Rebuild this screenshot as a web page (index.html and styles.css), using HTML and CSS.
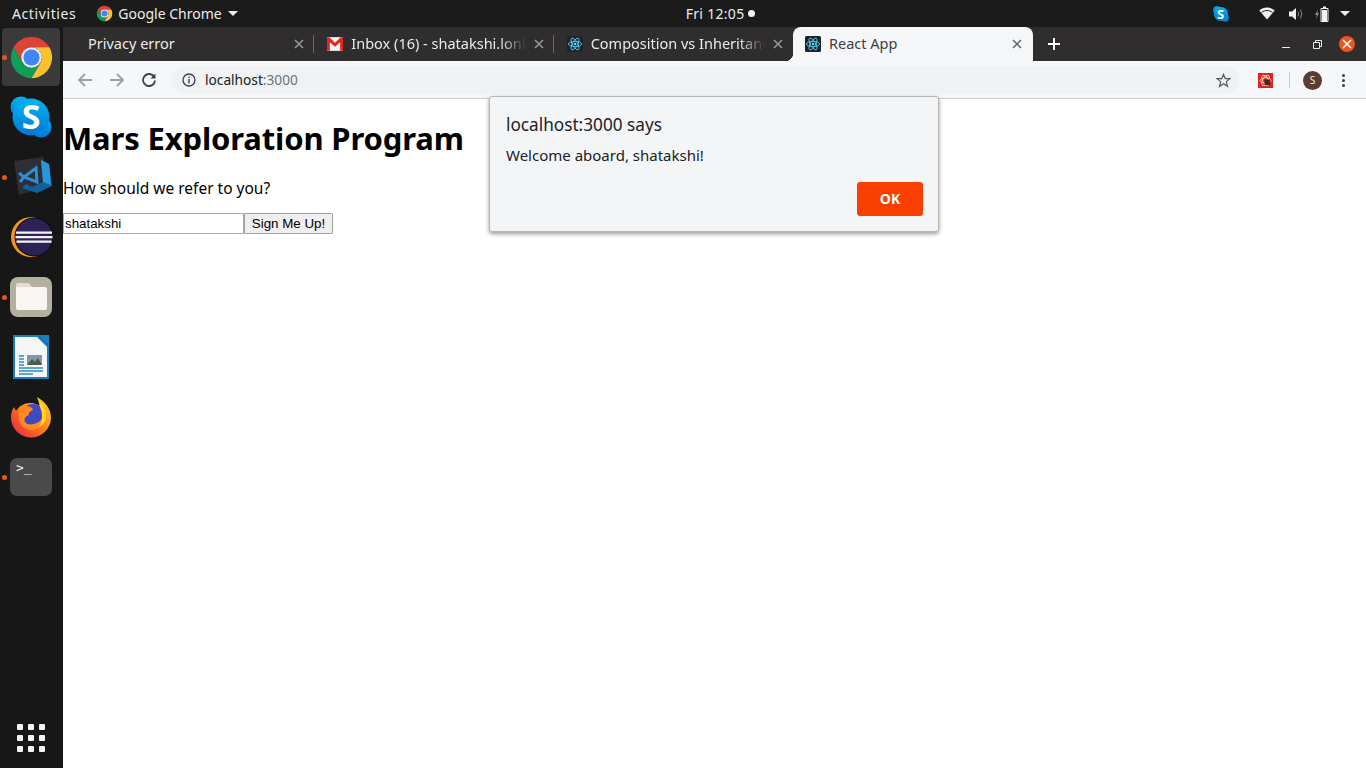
FILE: index.html
```html
<!doctype html>
<html lang="en">
<head>
<meta charset="utf-8">
<title>React App</title>
<link rel="stylesheet" href="styles.css">
</head>
<body>

<svg class="defs" width="0" height="0">
  <symbol id="chrome" viewBox="0 0 48 48">
    <path fill="#db4437" d="M24 13H43.05A22 22 0 0 0 4.97 13L14.47 29.5A11 11 0 0 1 24 13Z"/>
    <path fill="#fbc02d" d="M33.53 29.5L24 46A22 22 0 0 0 43.05 13H24A11 11 0 0 1 33.53 29.5Z"/>
    <path fill="#0f9d58" d="M14.47 29.5L4.97 13A22 22 0 0 0 24 46L33.53 29.5A11 11 0 0 1 14.47 29.5Z"/>
    <circle cx="24" cy="24" r="11" fill="#e8eaf0"/>
    <circle cx="24" cy="24" r="8.6" fill="#4285f4"/>
  </symbol>
  <symbol id="react" viewBox="0 0 16 16">
    <rect width="16" height="16" rx="1.5" fill="#20232a"/>
    <g fill="none" stroke="#61dafb" stroke-width=".8">
      <ellipse cx="8" cy="8" rx="6.6" ry="2.6"/>
      <ellipse cx="8" cy="8" rx="6.6" ry="2.6" transform="rotate(60 8 8)"/>
      <ellipse cx="8" cy="8" rx="6.6" ry="2.6" transform="rotate(120 8 8)"/>
    </g>
    <circle cx="8" cy="8" r="1.3" fill="#61dafb"/>
  </symbol>
  <symbol id="skype" viewBox="0 0 42 42">
    <defs>
      <linearGradient id="skypeBlue" x1="0" y1="0" x2="0" y2="1">
        <stop offset="0" stop-color="#00b4f1"/>
        <stop offset="1" stop-color="#0078d7"/>
      </linearGradient>
    </defs>
    <circle cx="11" cy="11" r="10.5" fill="url(#skypeBlue)"/>
    <circle cx="31" cy="31" r="10.5" fill="url(#skypeBlue)"/>
    <circle cx="21" cy="21" r="18.5" fill="url(#skypeBlue)"/>
  </symbol>
  <symbol id="close" viewBox="0 0 10 10">
    <path d="M1 1L9 9M9 1L1 9" fill="none" stroke="currentColor" stroke-width="1.5"/>
  </symbol>
</svg>

<div class="topbar">
  <span class="activities">Activities</span>
  <span class="appmenu">
    <svg class="appmenu-icon"><use href="#chrome"/></svg>
    Google Chrome
    <span class="caret"></span>
  </span>
  <span class="clock">Fri 12:05 <span class="clock-dot"></span></span>
  <div class="tray">
    <span class="tray-skype">
      <svg width="16" height="16"><use href="#skype"/></svg>
      <span class="tray-skype-s">S</span>
    </span>
    <svg class="tray-wifi" width="16" height="13" viewBox="0 0 16 13">
      <path fill="#f2f2f2" d="M8 12.500L.3 3.600C2.400 1.700 5 .6 8 .6s5.600 1.100 7.700 3z"/>
      <path fill="none" stroke="#1b1b1b" stroke-width="1" d="M2.600 5.400C4.100 4.200 6 3.500 8 3.500s3.900.7 5.400 1.900"/>
    </svg>
    <svg class="tray-vol" width="15" height="14" viewBox="0 0 15 14">
      <path fill="#f2f2f2" d="M0 4.500h3L7 1v12L3 9.500H0z"/>
      <path fill="none" stroke="#8a8a8a" stroke-width="1" d="M9 4.500q1.500 2.500 0 5M11.500 2.500q2.500 4.500 0 9"/>
    </svg>
    <svg class="tray-bat" width="14" height="16" viewBox="0 0 14 16">
      <path fill="#8a8a8a" d="M3 3L0 9h1.800L1 13l3-6H2.200z"/>
      <path fill="none" stroke="#f2f2f2" d="M6 2.500h7v13H6z"/>
      <rect x="8" y=".5" width="3" height="2" fill="#f2f2f2"/>
      <rect x="7" y="4" width="5" height="11" fill="#f2f2f2"/>
    </svg>
    <span class="caret"></span>
  </div>
</div>

<div class="desktop">
  <nav class="dock">
    <div class="dock-item is-active running">
      <svg width="45" height="45"><use href="#chrome"/></svg>
    </div>
    <div class="dock-item">
      <span class="dock-skype">
        <svg width="42" height="42"><use href="#skype"/></svg>
        <span class="dock-skype-s">S</span>
      </span>
    </div>
    <div class="dock-item running">
      <svg width="42" height="42" viewBox="0 0 42 42">
        <path fill="#2e2e33" d="M4 5L33 1L42 29L9 39Z"/>
        <path fill="#0e639f" d="M12 32L27 37L42 30L39 8L31 4L33 26L22 31L16 28Z"/>
        <path fill="#2a97dd" d="M31 4L39 8L41 29L33 26Z"/>
        <path fill="none" stroke="#2a8fd6" stroke-width="3" d="M9 17l5 4l-4 5M14 21L26 12L27 26L14 21"/>
      </svg>
    </div>
    <div class="dock-item">
      <svg width="44" height="42" viewBox="0 0 44 42">
        <circle cx="22" cy="21" r="20" fill="#f7941e"/>
        <circle cx="25" cy="21" r="19.500" fill="#0d0d12"/>
        <circle cx="25" cy="21" r="18.500" fill="#2c2255"/>
        <path fill="#f4f2f8" d="M7 15.500h36v2.300H7zM6.500 20h37v2.300h-37zM7.500 24.500h35v2.300h-35z"/>
      </svg>
    </div>
    <div class="dock-item running">
      <svg width="42" height="40" viewBox="0 0 42 40">
        <rect width="42" height="40" rx="8" fill="#b5af9f"/>
        <path fill="#f7f6f3" d="M6 9a3 3 0 0 1 3-3h9l4 4h13a2 2 0 0 1 2 2v19a2 2 0 0 1-2 2H8a2 2 0 0 1-2-2z"/>
        <path fill="#dfdcd4" d="M6 9a3 3 0 0 1 3-3h9l4 4H6z"/>
      </svg>
    </div>
    <div class="dock-item">
      <svg width="36" height="44" viewBox="0 0 36 44">
        <path fill="#1c7fbc" d="M0 0H25L36 11V44H0Z"/>
        <path fill="#f4f6f8" d="M2 2H24L34 12V42H2Z"/>
        <path fill="#1c7fbc" d="M25 0H36V11Z"/>
        <path stroke="#2c8cc7" stroke-width="1.300" d="M6 21h5M6 24h5M6 27h5M6 30h5M6 33h24M6 36h24M6 39h14"/>
        <rect x="14" y="20" width="15" height="10" fill="#7f97a8"/>
        <path fill="#4d5a48" d="M14 30l5-6l3 3l3-4l4 7z"/>
      </svg>
    </div>
    <div class="dock-item">
      <svg width="42" height="42" viewBox="0 0 42 42">
        <defs>
          <linearGradient id="foxFur" x1="1" y1="0" x2="0" y2="1">
            <stop offset="0" stop-color="#ffe226"/>
            <stop offset=".5" stop-color="#ff7a18"/>
            <stop offset="1" stop-color="#e6194b"/>
          </linearGradient>
        </defs>
        <path fill="url(#foxFur)" d="M27 1C34 5 41 12 41 22A20 20 0 1 1 1 21C1 17 2 14 4 11L6 15C9 10 14 7 20 7C25 7 28 9 30 10C29 7 28 4 27 1Z"/>
        <circle cx="23" cy="20" r="12" fill="#3f49c4"/>
        <path fill="#ff8a1f" d="M10 11C15 9 22 10 23 14C20 15 18 17 19 19C15 20 13 24 16 27C20 30 27 28 31 24C33 21 33 18 32 15C36 21 33 33 22 34C14 34 8 27 9 20C9 17 9 14 10 11Z"/>
        <path fill="#ffd426" d="M29 5C34 9 37 15 36 22C35 27 32 30 28 32C32 27 33 20 31 14C30 11 29 8 29 5Z"/>
      </svg>
    </div>
    <div class="dock-item running">
      <span class="terminal-icon">&gt;_</span>
    </div>
    <div class="apps-grid">
      <i></i><i></i><i></i><i></i><i></i><i></i><i></i><i></i><i></i>
    </div>
  </nav>

  <main class="window">
    <div class="tabstrip">
      <div class="tab">
        <span class="tab-title">Privacy error</span>
        <svg class="tab-close"><use href="#close"/></svg>
      </div>
      <div class="tab">
        <svg class="favicon" viewBox="0 0 14 12">
          <rect width="14" height="12" fill="#f5f5f5"/>
          <path d="M0 12V0h2l5 5l5-5h2v12h-2.500V4.500L7 8.500L2.500 4.500V12z" fill="#e0281f"/>
        </svg>
        <span class="tab-title is-cut">Inbox (16) - shatakshi.lonk</span>
        <svg class="tab-close"><use href="#close"/></svg>
      </div>
      <div class="tab">
        <svg class="favicon"><use href="#react"/></svg>
        <span class="tab-title is-cut">Composition vs Inheritanc</span>
        <svg class="tab-close"><use href="#close"/></svg>
      </div>
      <div class="tab is-current">
        <svg class="favicon"><use href="#react"/></svg>
        <span class="tab-title">React App</span>
        <svg class="tab-close"><use href="#close"/></svg>
      </div>
      <svg class="new-tab" width="12" height="12" viewBox="0 0 12 12">
        <path d="M6 0V12M0 6H12" stroke="#fff" stroke-width="2"/>
      </svg>
      <div class="winbtns">
        <span class="win-min"></span>
        <svg class="win-max" width="9" height="9" viewBox="0 0 9 9">
          <path d="M2.500 2V.5h6v6H7M.5 2.500h6v6h-6z" fill="none" stroke="#e8e8e8"/>
        </svg>
        <span class="win-close"><svg width="10" height="10"><use href="#close"/></svg></span>
      </div>
    </div>

    <div class="toolbar">
      <svg class="tool-btn" viewBox="0 0 16 16"><path d="M15 8H2M8 2L2 8L8 14" fill="none" stroke="#9aa0a6" stroke-width="1.800"/></svg>
      <svg class="tool-btn" viewBox="0 0 16 16"><path d="M1 8H14M8 2L14 8L8 14" fill="none" stroke="#9aa0a6" stroke-width="1.800"/></svg>
      <svg class="tool-btn" viewBox="0 0 16 16"><path d="M13.200 5A6 6 0 1 0 14 8.500" fill="none" stroke="#3c4043" stroke-width="1.900"/><path d="M14.500 1.500V6.500H9.500Z" fill="#3c4043"/></svg>
      <div class="omnibox">
        <svg class="info-icon" viewBox="0 0 14 14">
          <circle cx="7" cy="7" r="6" fill="none" stroke="#3c4043" stroke-width="1.300"/>
          <path d="M7 6v4.500M7 3.500v1.400" stroke="#3c4043" stroke-width="1.400"/>
        </svg>
        <span class="url">localhost<span class="url-port">:3000</span></span>
        <svg class="star-icon" viewBox="0 0 16 16">
          <path d="M8 1.500L9.900 6H14.800L11 9.200L12.200 14.200L8 11.500L3.800 14.200L5 9.200L1.200 6H6.100Z" fill="none" stroke="#55595d" stroke-width="1.300"/>
        </svg>
      </div>
      <svg class="ext-icon" viewBox="0 0 16 16">
        <rect width="16" height="16" fill="#e2231a"/>
        <g fill="none" stroke="#f7c4c0" stroke-width="1">
          <ellipse cx="8" cy="8" rx="6" ry="3"/>
          <ellipse cx="8" cy="8" rx="6" ry="3" transform="rotate(60 8 8)"/>
          <ellipse cx="8" cy="8" rx="6" ry="3" transform="rotate(120 8 8)"/>
        </g>
        <rect x="7" y="7" width="6" height="6" fill="#3a2a2a"/>
      </svg>
      <span class="tool-sep"></span>
      <span class="avatar">S</span>
      <span class="menu-dots"><i></i><i></i><i></i></span>
    </div>

    <div class="page">
      <h1 class="page-title">Mars Exploration Program</h1>
      <p class="page-text">How should we refer to you?</p>
      <form class="signup">
        <input class="signup-input" type="text" value="shatakshi">
        <button class="signup-btn" type="button">Sign Me Up!</button>
      </form>
    </div>

    <div class="dialog">
      <div class="dialog-title">localhost:3000 says</div>
      <div class="dialog-text">Welcome aboard, shatakshi!</div>
      <div class="dialog-actions">
        <button class="dialog-ok" type="button">OK</button>
      </div>
    </div>
  </main>
</div>

</body>
</html>
```

FILE: styles.css
```css
* {
  box-sizing: border-box;
}

html, body {
  width: 100%;
  height: 100%;
  margin: 0;
  padding: 0;
  overflow: hidden;
  background-color: white;
  font-family: 'Noto Sans', sans-serif;
}

.defs {
  position: absolute;
}

/* gnome top bar */
.topbar {
  height: 27px;
  display: flex;
  align-items: center;
  background-color: #1b1b1b;
  color: #ececec;
  font-size: 14px;
}

.activities {
  margin-left: 12px;
  letter-spacing: 0.6px;
}

.appmenu {
  display: flex;
  align-items: center;
  margin-left: 20px;
}

.appmenu-icon {
  width: 17px;
  height: 17px;
  margin-right: 5px;
}

.caret {
  display: inline-block;
  width: 0;
  height: 0;
  margin-left: 6px;
  border-left: 5px solid transparent;
  border-right: 5px solid transparent;
  border-top: 5px solid #ececec;
}

.clock {
  display: flex;
  align-items: center;
  gap: 4px;
  margin-left: 448px;
  letter-spacing: 0.3px;
}

.clock-dot {
  width: 7px;
  height: 7px;
  border-radius: 50%;
  background-color: #f2f2f2;
}

.tray {
  display: flex;
  align-items: center;
  margin-left: auto;
  padding-right: 16px;
}

.tray-skype {
  position: relative;
  display: flex;
  margin-right: 30px;
}

.tray-skype-s {
  position: absolute;
  left: 4px;
  top: -1px;
  color: white;
  font-size: 13px;
  font-weight: 700;
}

.tray-wifi {
  margin-right: 14px;
}

.tray-vol {
  margin-right: 11px;
}

.tray-bat {
  margin-right: 5px;
}

/* desktop */
.desktop {
  display: flex;
  height: 741px;
}

.dock {
  width: 63px;
  flex: none;
  display: flex;
  flex-direction: column;
  align-items: flex-start;
  padding: 1px 0 0 2px;
  background-color: #171717;
}

.dock-item {
  position: relative;
  width: 58px;
  height: 58px;
  margin-bottom: 2px;
  display: flex;
  align-items: center;
  justify-content: center;
  border-radius: 4px;
}

.dock-item.is-active {
  background-color: #3a3a3a;
}

.dock-item.running::before {
  content: "";
  position: absolute;
  left: 0;
  top: 27px;
  width: 5px;
  height: 5px;
  border-radius: 50%;
  background-color: #e95420;
}

.dock-skype {
  position: relative;
  display: flex;
}

.dock-skype-s {
  position: absolute;
  left: 0;
  right: 0;
  top: -3px;
  text-align: center;
  color: white;
  font-size: 34px;
  font-weight: 700;
}

.terminal-icon {
  width: 42px;
  height: 38px;
  padding-left: 6px;
  border-radius: 7px;
  background-color: #4a4a4a;
  color: #f2f2f2;
  font-family: 'DejaVu Sans Mono', monospace;
  font-size: 13px;
  line-height: 20px;
}

.apps-grid {
  display: grid;
  grid-template-columns: repeat(3, 6px);
  gap: 5px;
  align-self: center;
  margin-top: auto;
  margin-right: 3px;
  margin-bottom: 16px;
}

.apps-grid i {
  height: 6px;
  background-color: #f4f4f4;
  border-radius: 1px;
}

/* chrome window */
.window {
  position: relative;
  flex: 1;
  min-width: 0;
  display: flex;
  flex-direction: column;
}

.tabstrip {
  height: 34px;
  flex: none;
  display: flex;
  align-items: stretch;
  padding-left: 12px;
  background-color: #2f2d2e;
}

.tab {
  position: relative;
  flex: 0 0 239.33px;
  min-width: 0;
  display: flex;
  align-items: center;
  padding: 0 10px 0 13px;
  color: #e8eaed;
  font-size: 14.5px;
}

.tab::after {
  content: "";
  position: absolute;
  right: 0;
  top: 8px;
  height: 18px;
  width: 1px;
  background-color: #6b6b6b;
}

.tab:nth-child(3)::after, .tab.is-current::after {
  display: none;
}

.tab.is-current {
  flex-basis: 240px;
  padding-left: 12px;
  padding-right: 11px;
  background-color: #f5f6f8;
  color: #3c4043;
  border-radius: 8px 8px 0 0;
}

.tab.is-current::before {
  content: "";
  position: absolute;
  left: -8px;
  bottom: 0;
  width: 8px;
  height: 8px;
  background: radial-gradient(circle at 0 0, transparent 8px, #f5f6f8 8.500px);
}

.favicon {
  width: 16px;
  height: 16px;
  flex: none;
  margin-right: 8px;
}

.tab-title {
  flex: 1;
  min-width: 0;
  margin-top: -2px;
  white-space: nowrap;
}

.tab-title.is-cut {
  -webkit-mask-image: linear-gradient(to right, black 85%, transparent);
  mask-image: linear-gradient(to right, black 85%, transparent);
}

.tab-close {
  width: 10px;
  height: 10px;
  flex: none;
  margin-left: 8px;
  color: #9b9b9b;
}

.tab.is-current .tab-close {
  color: #5f6368;
}

.new-tab {
  align-self: center;
  margin-left: 15px;
}

.winbtns {
  display: flex;
  align-items: center;
  margin-left: auto;
  padding-right: 11px;
}

.win-min {
  width: 8px;
  height: 1px;
  margin-top: 6px;
  margin-right: 23px;
  background-color: #e8e8e8;
}

.win-max {
  margin-right: 17px;
}

.win-close {
  width: 16px;
  height: 16px;
  display: flex;
  align-items: center;
  justify-content: center;
  border-radius: 50%;
  background-color: #e95420;
  color: white;
}

.toolbar {
  height: 38px;
  flex: none;
  display: flex;
  align-items: center;
  padding-left: 14px;
  padding-top: 1px;
  background-color: #f6f7f9;
  border-bottom: 1px solid #c6cacd;
}

.tool-btn {
  width: 16px;
  height: 16px;
  margin-right: 16px;
}

.omnibox {
  width: 1069px;
  height: 28px;
  margin-left: -2px;
  display: flex;
  align-items: center;
  padding: 0 9px 0 11px;
  border-radius: 14px;
  background-color: #eff1f2;
}

.info-icon {
  width: 14px;
  height: 14px;
  margin-right: 9px;
}

.url {
  margin-top: -2px;
  color: #202124;
  font-size: 13.7px;
}

.url-port {
  color: #70757a;
}

.star-icon {
  width: 15px;
  height: 15px;
  margin-left: auto;
}

.ext-icon {
  width: 15px;
  height: 15px;
  margin-left: 18px;
}

.tool-sep {
  width: 1px;
  height: 16px;
  margin-left: 16px;
  background-color: #c6cacd;
}

.avatar {
  width: 19px;
  height: 19px;
  margin-left: 13px;
  display: flex;
  align-items: center;
  justify-content: center;
  border-radius: 50%;
  background-color: #5d3b30;
  color: #eee;
  font-size: 10px;
}

.menu-dots {
  display: flex;
  flex-direction: column;
  gap: 2px;
  margin-left: 20px;
}

.menu-dots i {
  width: 3px;
  height: 3px;
  border-radius: 50%;
  background-color: #3c4043;
}

/* page content */
.page-title {
  margin: 21px 0 22px;
  font-size: 31px;
  line-height: 37px;
  font-weight: 700;
  letter-spacing: -0.15px;
  color: black;
}

.page-text {
  margin: 0 0 15px;
  font-size: 15.5px;
  line-height: 19px;
  color: black;
}

.signup {
  display: flex;
  margin: 0;
}

.signup-input {
  width: 181px;
  height: 21px;
  padding: 1px;
  border: 1px solid #a9a9a9;
  font-family: 'Liberation Sans', sans-serif;
  font-size: 13.333px;
  color: black;
}

.signup-btn {
  width: 89px;
  height: 21px;
  padding: 0;
  border: 1px solid #a0a0a0;
  border-radius: 1px;
  background-color: #efefef;
  font-family: 'Liberation Sans', sans-serif;
  font-size: 13.333px;
  color: black;
}

/* js alert */
.dialog {
  position: absolute;
  left: 426px;
  top: 69px;
  width: 450px;
  height: 136px;
  padding: 16px 15px 16px 16px;
  background-color: #f4f5f7;
  border: 1px solid #b4b5b7;
  border-radius: 3px;
  box-shadow: 0 2px 4px rgba(0, 0, 0, 0.4);
  color: #202124;
}

.dialog-title {
  font-size: 17.2px;
  line-height: 24px;
}

.dialog-text {
  margin-top: 8px;
  font-size: 15px;
  line-height: 20px;
}

.dialog-actions {
  display: flex;
  justify-content: flex-end;
  margin-top: 17px;
}

.dialog-ok {
  width: 66px;
  height: 34px;
  padding-bottom: 2px;
  border: 0;
  border-radius: 3px;
  background-color: #fa4000;
  color: white;
  font-family: 'Noto Sans', sans-serif;
  font-size: 14px;
  font-weight: 700;
}
```
